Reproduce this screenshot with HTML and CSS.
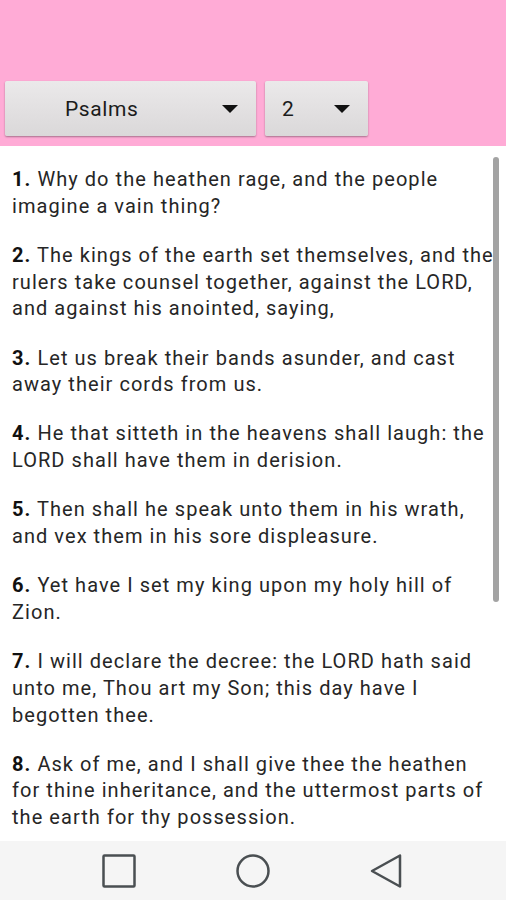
FILE: index.html
```html
<!DOCTYPE html>
<html>
<head>
<meta charset="utf-8">
<link rel="stylesheet" href="styles.css">
</head>
<body>
<div class="screen">
  <header class="header">
    <div class="spinner book"><span class="label">Psalms</span><span class="caret"></span></div>
    <div class="spinner chapter"><span class="label">2</span><span class="caret"></span></div>
  </header>
  <main class="content">
    <p class="verse"><b>1.</b> Why do the heathen rage, and the people imagine a vain thing?</p>
    <p class="verse"><b>2.</b> The kings of the earth set themselves, and the rulers take counsel together, against the LORD, and against his anointed, saying,</p>
    <p class="verse"><b>3.</b> Let us break their bands asunder, and cast away their cords from us.</p>
    <p class="verse"><b>4.</b> He that sitteth in the heavens shall laugh: the LORD shall have them in derision.</p>
    <p class="verse"><b>5.</b> Then shall he speak unto them in his wrath, and vex them in his sore displeasure.</p>
    <p class="verse"><b>6.</b> Yet have I set my king upon my holy hill of Zion.</p>
    <p class="verse"><b>7.</b> I will declare the decree: the LORD hath said unto me, Thou art my Son; this day have I begotten thee.</p>
    <p class="verse"><b>8.</b> Ask of me, and I shall give thee the heathen for thine inheritance, and the uttermost parts of the earth for thy possession.</p>
    <div class="scrollbar"></div>
  </main>
  <nav class="navbar">
    <svg class="nav-icon" width="36" height="36" viewBox="0 0 36 36"><rect x="2.5" y="2.5" width="31" height="31" fill="none" stroke="#4a4f52" stroke-width="2.5" rx="1"/></svg>
    <svg class="nav-icon" width="36" height="36" viewBox="0 0 36 36"><circle cx="18" cy="18" r="15.5" fill="none" stroke="#4a4f52" stroke-width="2.5"/></svg>
    <svg class="nav-icon" width="36" height="36" viewBox="0 0 36 36"><path d="M31 2.5 L3 18 L31 33.5 Z" fill="none" stroke="#4a4f52" stroke-width="2.5" stroke-linejoin="round"/></svg>
  </nav>
</div>
</body>
</html>
```
FILE: styles.css
```css
html, body {
  margin: 0;
  padding: 0;
  background: #ffffff;
}
.screen {
  width: 506px;
  height: 900px;
  display: flex;
  flex-direction: column;
  overflow: hidden;
  font-family: Roboto, "Liberation Sans", sans-serif;
}
.header {
  height: 146px;
  flex: none;
  background: #ffabd6;
  display: flex;
  align-items: flex-start;
  gap: 9px;
  padding: 81px 0 0 5px;
  box-sizing: border-box;
}
.spinner {
  height: 55px;
  box-sizing: border-box;
  background: linear-gradient(#ebe9ea, #dad8d9);
  border-radius: 2px;
  box-shadow: 0 1px 2px rgba(0,0,0,0.35);
  display: flex;
  align-items: center;
  color: #1c1c1c;
  font-size: 21px;
  letter-spacing: 0.6px;
}
.book {
  width: 251px;
  padding: 0 18px 0 60px;
}
.chapter {
  width: 103px;
  padding: 0 18px 0 17px;
}
.label {
  flex: 1;
}
.caret {
  width: 0;
  height: 0;
  border-left: 8px solid transparent;
  border-right: 8px solid transparent;
  border-top: 8px solid #111;
}
.content {
  flex: 1;
  position: relative;
  overflow: hidden;
  padding: 20px 8px 0 12px;
  color: #262626;
  font-size: 20px;
  line-height: 26.7px;
  letter-spacing: 1.05px;
}
.verse {
  margin: 0 0 22.5px 0;
  width: 488px;
}
.verse b {
  font-weight: 700;
  color: #111;
}
.scrollbar {
  position: absolute;
  left: 493px;
  top: 11px;
  width: 6px;
  height: 445px;
  border-radius: 3px;
  background: #a3a3a3;
}
.navbar {
  height: 59px;
  flex: none;
  background: #f5f5f5;
  display: flex;
  align-items: center;
  justify-content: center;
  gap: 98px;
}
.nav-icon {
  display: block;
}
```
